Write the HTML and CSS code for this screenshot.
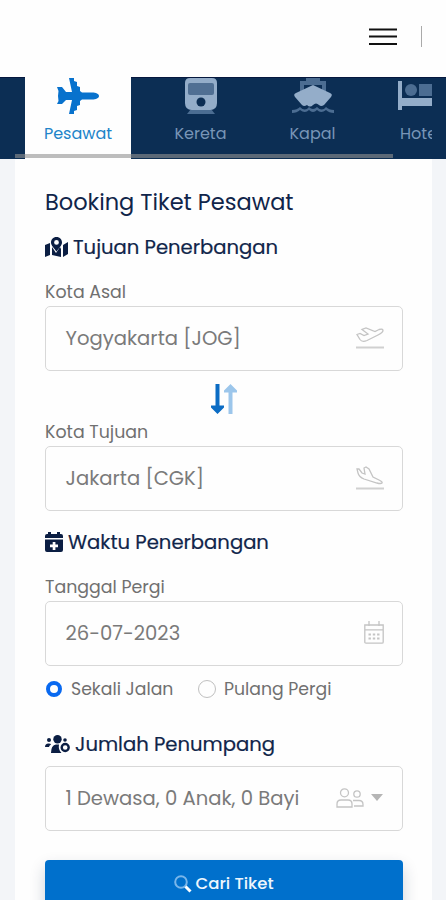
FILE: index.html
```html
<!DOCTYPE html>
<html lang="id">
<head>
<meta charset="utf-8">
<meta name="viewport" content="width=device-width, initial-scale=1">
<title>Booking Tiket Pesawat</title>
<link rel="stylesheet" href="styles.css">
</head>
<body>
<header class="topbar">
  <svg class="menu" viewBox="0 0 28 18"><path d="M0 1.500h28M0 8.500h28M0 16h28"/></svg>
  <span class="divider"></span>
</header>
<nav class="tabs">
  <div class="strip">
    <a class="tab active">
      <svg class="tab-icon" viewBox="0 0 42 36"><path d="M12 0h5v3l3 1v4l3 1v4l2 1.500h10c4 0 7 1.500 7 3.500s-3 3.500-7 3.500H25L23 23v4l-3 1v4l-3 1v3h-5l3-14H9l-4 4H0l1.500-3-.5-5 .5-5L0 9h5l4 5h6z"/></svg>
      <span>Pesawat</span>
    </a>
    <a class="tab kereta">
      <svg class="tab-icon" viewBox="0 0 42 36"><path class="dim" d="M11 31h20l4 5H7z"/><path d="M10 0h22q5 0 5 5v20q0 7-7 7H12q-7 0-7-7V5q0-5 5-5z"/><path class="window" d="M10 5h22q2 0 2 2v8q0 2-2 2H10q-2 0-2-2V7q0-2 2-2z"/><circle class="hole" cx="21" cy="24" r="4.500"/></svg>
      <span>Kereta</span>
    </a>
    <a class="tab kapal">
      <svg class="tab-icon" viewBox="0 0 42 36"><path class="dim" d="M14 0h14v3h6v11l-4-1V7H12v6l-4 1V3h6z"/><path d="M21 7l17 8q3 1 1 4l-7 8q-3 2-5 0-3-3-6 0-3 3-6 0-3 2-5 0l-7-8q-2-3 1-4z"/><path class="dim" d="M0 35v-3q5 0 8-3 5 5 9 0 4 4 8 0 5 5 9 0 3 3 8 3v3q-5 0-8-3-5 4-9 0-4 4-8 0-4 4-9 0-3 3-8 3z"/></svg>
      <span>Kapal</span>
    </a>
    <a class="tab hotel">
      <svg class="tab-icon" viewBox="0 0 42 36"><path d="M0 3h4v17h38v8H4v4H0z"/><circle class="dim" cx="13" cy="12" r="6"/><path class="dim" d="M21 6h17q4 0 4 4v8H21z"/></svg>
      <span>Hotel</span>
    </a>
  </div>
  <span class="scrollbar"></span>
</nav>
<main class="card">
  <h1>Booking Tiket Pesawat</h1>
  <h2 class="route-title">
    <svg class="map-icon" viewBox="0 0 23 20"><path d="M0 8l5-2v12l-5 2zM18 8l5-3v12l-5 3zM7 10l4 6 4-6 1 2v8l-9-2z"/><path fill-rule="evenodd" d="M11.500 0C8 0 6 2.500 6 5.500c0 3 3.500 6 5.500 9 2-3 5.500-6 5.500-9C17 2.500 15 0 11.500 0zm0 3a2.400 2.400 0 1 1 0 4.800 2.400 2.400 0 0 1 0-4.800z"/></svg>
    <span>Tujuan Penerbangan</span>
  </h2>
  <label>Kota Asal</label>
  <div class="field">
    <span>Yogyakarta [JOG]</span>
    <svg class="plane" viewBox="0 0 28 22"><path d="M1 7.500l3-1 4 2 4-1.500-6-4.500 4-1.500 9 3.500 4-2q4-1 4 1t-5 4.500L11 13.500q-5 2-7-1z"/><path class="ground" d="M0 20.500h28"/></svg>
  </div>
  <div class="swap">
    <svg viewBox="0 0 26 30"><path class="up" d="M19.500 0L26 6.500v2h-4.500V30h-4V8.500H13v-2z"/><path class="down" d="M4.500 0h4v21.500H13v2L6.500 30 0 23.500v-2h4.500z"/></svg>
  </div>
  <label>Kota Tujuan</label>
  <div class="field">
    <span>Jakarta [CGK]</span>
    <svg class="plane landing" viewBox="0 0 28 24"><path d="M1 3h2l3 4 3 1-1-6 2-1 3 2 4 8 6 3q4 2 3 3t-5 0L8 13q-5-2-6-6z"/><path class="ground" d="M0 22.500h28"/></svg>
  </div>
  <h2 class="time-title">
    <svg class="cal-solid" viewBox="0 0 18 20"><path fill-rule="evenodd" d="M3 0h3v2h6V0h3v2h1q2 0 2 2v2H0V4q0-2 2-2h1zM0 7.500h18V18q0 2-2 2H2q-2 0-2-2zM7.700 10v2.500H5v2.700h2.700V18h2.700v-2.800H13v-2.700h-2.600V10z"/></svg>
    <span>Waktu Penerbangan</span>
  </h2>
  <label>Tanggal Pergi</label>
  <div class="field">
    <span>26-07-2023</span>
    <svg class="cal-line" viewBox="0 0 20 23"><path d="M.8 4h18.400v17q0 1.200-1.200 1.200H2Q.8 22.200.8 21zM1 8.800h18M5 0v5M15 0v5"/><path class="dots" d="M4.500 13.500h11M4.500 17.500h11"/></svg>
  </div>
  <div class="options">
    <span class="radio checked"></span><span class="first-option">Sekali Jalan</span>
    <span class="radio"></span><span>Pulang Pergi</span>
  </div>
  <h2 class="people-title">
    <svg class="group-icon" viewBox="0 0 25 18"><circle cx="4" cy="5" r="2"/><circle cx="12.500" cy="4.200" r="4.200"/><circle cx="20" cy="5" r="1.800"/><path d="M0 12q0-3.500 3.500-3.500 2.500 0 2.500 1-2 1-2 2.500zM6 18q0-8 5-8.500h3q-1 5 2.500 8.500z"/><circle class="ring" cx="20.200" cy="12.500" r="3.500"/></svg>
    <span>Jumlah Penumpang</span>
  </h2>
  <div class="field people">
    <span>1 Dewasa, 0 Anak, 0 Bayi</span>
    <svg class="users" viewBox="0 0 28 20"><circle cx="8.500" cy="4.800" r="4"/><circle cx="21" cy="6" r="3.200"/><path d="M1 19v-3q0-4 4-4h7q4 0 4 4v3zM17 12.500h6q4 0 4 4V18h-9"/></svg>
    <svg class="caret" viewBox="0 0 12 7"><path d="M0 0h12L6 7z"/></svg>
  </div>
  <button class="search" type="button">
    <svg viewBox="0 0 18 18"><circle cx="7" cy="7" r="5.800"/><path d="M11.500 11.500l5 5"/></svg>
    <span>Cari Tiket</span>
  </button>
</main>
</body>
</html>
```
FILE: styles.css
```css
* { box-sizing: border-box; }
html, body { height: 100%; }
body {
  margin: 0;
  overflow: hidden;
  background: #f3f5f8;
  font-family: Poppins, Inter, sans-serif;
  color: #707070;
}
svg { display: block; flex: none; overflow: visible; }
span { white-space: nowrap; }
.topbar {
  height: 77px;
  background: #fefefe;
  display: flex;
  justify-content: flex-end;
  padding: 26px 24px 0 0;
  gap: 24px;
}
.menu { width: 28px; height: 18px; margin-top: 2px; }
.menu path { stroke: #111; stroke-width: 2; }
.divider { width: 1px; height: 21px; background: #aaa; }
.tabs { height: 82px; background: linear-gradient(#06183e 1px, #0c2e54 1px); padding: 0 14px 0 15px; position: relative; }
.strip { height: 82px; overflow: hidden; display: flex; padding-left: 10px; font-size: 16px; color: #7895b7; }
.tab { flex: none; width: 106px; height: 82px; padding-top: 1px; display: flex; flex-direction: column; align-items: center; line-height: 24px; }
.tab svg { fill: #94adc9; margin-bottom: 8px; }
.tab .dim { fill: #4c6d92; }
.tab .window { fill: #506f93; }
.tab .hole { fill: #0c2e54; }
.tab-icon { width: 42px; height: 36px; }
.active { background: #fefefe; color: #2184c9; }
.active svg { fill: #0872cd; }
.kereta { width: 139px; }
.kapal { width: 85px; }
.hotel { width: 128px; }
.hotel span { padding-left: 3px; }
.scrollbar { position: absolute; left: 15px; bottom: 1px; width: 378px; height: 4px; background: rgba(145, 145, 145, .6); }
.card { margin: 0 14px 0 15px; background: #fefefe; padding: 27px 29px 0 30px; height: 760px; }
h1, h2 { margin: 0; font-weight: 400; color: #10254a; display: flex; align-items: center; }
h1 { font-size: 22.500px; height: 32px; }
h2 { font-size: 19.600px; height: 30px; -webkit-text-stroke: .2px; }
h2 svg { fill: #0b1e43; }
.route-title { margin-top: 14px; gap: 5px; }
.map-icon { width: 23px; height: 20px; }
label { display: flex; align-items: center; height: 24px; font-size: 17.400px; }
.route-title + label { margin-top: 18px; }
.field { height: 65px; border: 1px solid #d8d8d8; border-radius: 5px; display: flex; align-items: center; justify-content: space-between; padding: 0 18px 2px 19.500px; font-size: 19.600px; color: #7a7a7a; margin-top: 2px; }
.field svg { fill: none; stroke: #c4c4c4; stroke-width: 1.300; }
.plane { width: 28px; height: 22px; }
.landing { height: 24px; }
.field .ground { stroke: #d0d0d0; stroke-width: 2; }
.swap { height: 49px; display: flex; justify-content: center; padding-top: 13px; }
.swap svg { width: 26px; height: 30px; }
.up { fill: #9cc6eb; }
.down { fill: #0b6cc4; }
.time-title { margin-top: 16px; gap: 5px; }
.cal-solid { width: 18px; height: 20px; }
.time-title + label { margin-top: 18px; }
.cal-line { width: 20px; height: 23px; }
.cal-line .dots { stroke-width: 2.200; stroke-dasharray: 2.400 1.900; }
.options { display: flex; align-items: center; height: 24px; margin-top: 11px; font-size: 17.300px; }
.radio { width: 18px; height: 18px; border: 1px solid #c0c0c0; border-radius: 50%; flex: none; margin-right: 8px; }
.checked { width: 16px; height: 16px; border: 4px solid #0969f0; margin: 0 9px 0 1px; }
.first-option { width: 103px; margin-right: 24px; }
.people-title { margin-top: 28px; gap: 5px; }
.group-icon { width: 25px; height: 18px; }
.group-icon .ring { fill: none; stroke: #0b1e43; stroke-width: 2.400; }
.people { margin-top: 7px; }
.users { width: 28px; height: 20px; margin-left: auto; margin-right: 7px; }
.field .caret { width: 12px; height: 7px; margin-right: 1px; fill: #b5b5b5; stroke: none; }
.search { width: 100%; height: 48px; margin-top: 29px; padding: 0 0 1px; border: 0; border-radius: 4px; background: #0070cc; color: #eef6fd; font: 500 16.500px Poppins, Inter, sans-serif; display: flex; align-items: center; justify-content: center; gap: 3px; box-shadow: 0 7px 16px rgba(20, 40, 70, .2); }
.search svg { width: 18px; height: 18px; fill: none; stroke: #79b6ea; stroke-width: 2; }
.search path { stroke: #fff; stroke-width: 3; }
```
